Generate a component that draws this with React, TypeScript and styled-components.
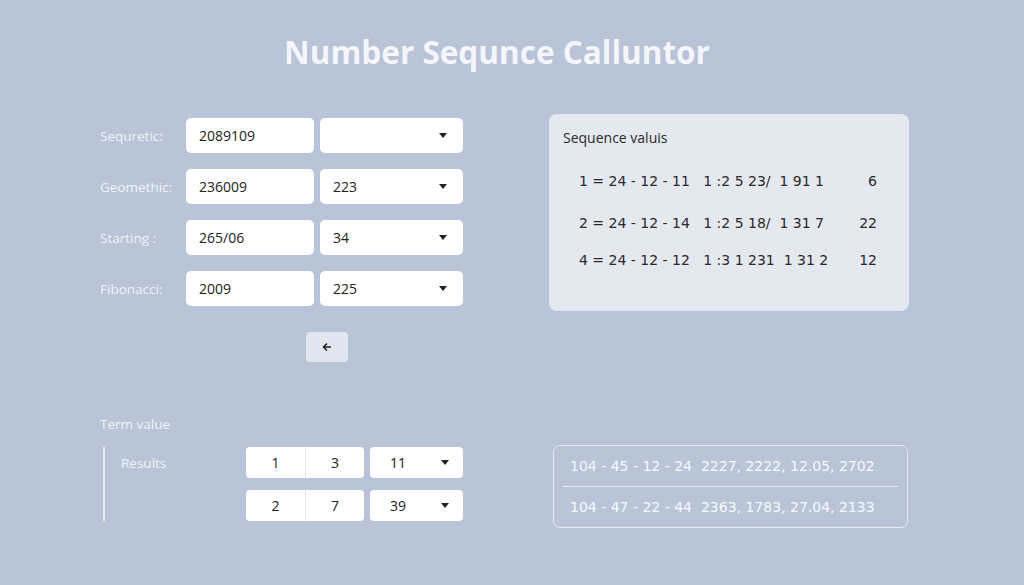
import React from 'react';
import styled, { createGlobalStyle } from 'styled-components';

const GlobalStyle = createGlobalStyle`
  html, body {
    margin: 0;
    padding: 0;
    background: #b9c4d8;
  }
  body {
    font-family: "Open Sans", "Noto Sans", sans-serif;
  }
`;

const Page = styled.div`
  width: 1024px;
  height: 585px;
  box-sizing: border-box;
  padding: 32px 0 0 100px;
  background: #b9c4d8;
  overflow: hidden;
`;

const Title = styled.h1`
  margin: 0 0 42px -100px;
  text-align: center;
  font-size: 31.5px;
  line-height: 40px;
  font-weight: 700;
  color: #f4f6fa;
  padding-right: 30px;
`;

const Section = styled.div`
  display: grid;
  grid-template-columns: 363px 360px;
  column-gap: 86px;
  align-items: start;
`;

const Form = styled.div`
  padding-top: 4px;
  display: grid;
  grid-template-columns: 80px 128px 143px;
  column-gap: 6px;
  row-gap: 16px;
  align-items: center;
`;

const Label = styled.div`
  font-size: 13.5px;
  color: #f0f3f8;
`;

const Field = styled.div`
  height: 35px;
  box-sizing: border-box;
  background: #fff;
  border-radius: 5px;
  display: flex;
  align-items: center;
  justify-content: space-between;
  padding: 0 16px 0 13px;
  font-size: 14px;
  color: #222;
`;

const Caret = styled.span`
  width: 0;
  height: 0;
  border-left: 4px solid transparent;
  border-right: 4px solid transparent;
  border-top: 5px solid #222;
`;

const ButtonRow = styled.div`
  grid-column: 2 / span 2;
  display: flex;
  justify-content: center;
  margin-top: 10px;
`;

const IconButton = styled.button`
  width: 42px;
  height: 30px;
  border: none;
  border-radius: 4px;
  background: #e2e6ee;
  display: flex;
  align-items: center;
  justify-content: center;
  padding: 0;
  margin-left: 4px;
`;

const Panel = styled.div`
  height: 197px;
  box-sizing: border-box;
  background: #e4e8ef;
  border-radius: 8px;
  padding: 15px 32px 0 14px;
  color: #2a2a2a;
`;

const PanelTitle = styled.div`
  font-size: 14px;
  line-height: 18px;
  margin-bottom: 25px;
`;

const SeqRow = styled.div`
  display: flex;
  justify-content: space-between;
  padding-left: 16px;
  font-family: "DejaVu Sans", sans-serif;
  font-size: 14px;
  line-height: 18px;
  white-space: pre;
  margin-bottom: ${p => p.$gap}px;
`;

const Bottom = styled(Section)`
  margin-top: 53px;
`;

const TermLabel = styled.div`
  font-size: 13.5px;
  line-height: 18px;
  color: #f0f3f8;
  margin-bottom: 14px;
`;

const ResultsBlock = styled.div`
  margin-left: 3px;
  border-left: 2px solid #e4e9f1;
  display: grid;
  grid-template-columns: 119px 118px 93px;
  column-gap: 6px;
  row-gap: 12px;
  padding-left: 16px;
  height: 74px;
  box-sizing: border-box;
`;

const ResultsLabel = styled.div`
  font-size: 13.5px;
  color: #f0f3f8;
  display: flex;
  align-items: center;
  height: 31px;
`;

const Cells = styled.div`
  display: grid;
  grid-template-columns: 1fr 1fr;
  height: 31px;
  background: #fff;
  border-radius: 4px;
  font-size: 14px;
  color: #222;
  & > span {
    display: flex;
    align-items: center;
    justify-content: center;
  }
  & > span + span {
    border-left: 1px solid #e4e6ea;
  }
`;

const SmallSelect = styled(Field)`
  height: 31px;
  border-radius: 4px;
  padding: 0 14px 0 20px;
`;

const OutBox = styled.div`
  margin: 30px 0 0 4px;
  width: 355px;
  height: 83px;
  box-sizing: border-box;
  border: 1.5px solid #e8edf5;
  border-radius: 7px;
  padding: 0 9px;
  display: flex;
  flex-direction: column;
  color: #f7f9fc;
`;

const OutLine = styled.div`
  flex: 1;
  display: flex;
  align-items: center;
  padding-left: 7px;
  white-space: pre;
  font-family: "DejaVu Sans", sans-serif;
  font-size: 14px;
  & + & {
    border-top: 1.5px solid #e8edf5;
  }
`;

const rows = [
  { label: 'Sequretic:', input: '2089109', sel: '' },
  { label: 'Geomethic:', input: '236009', sel: '223' },
  { label: 'Starting :', input: '265/06', sel: '34' },
  { label: 'Fibonacci:', input: '2009', sel: '225' },
];

const seq = [
  { expr: '1 = 24 - 12 - 11   1 :2 5 23/  1 91 1', val: '6', gap: 24 },
  { expr: '2 = 24 - 12 - 14   1 :2 5 18/  1 31 7', val: '22', gap: 19 },
  { expr: '4 = 24 - 12 - 12   1 :3 1 231  1 31 2', val: '12', gap: 0 },
];

export default function App() {
  return (
    <>
      <GlobalStyle />
      <Page>
        <Title>Number Sequnce Calluntor</Title>
        <Section>
          <Form>
            {rows.map(r => (
              <React.Fragment key={r.label}>
                <Label>{r.label}</Label>
                <Field>{r.input}</Field>
                <Field>
                  <span>{r.sel}</span>
                  <Caret />
                </Field>
              </React.Fragment>
            ))}
            <ButtonRow>
              <IconButton aria-label="back">
                <svg width="10" height="10" viewBox="0 0 10 10">
                  <path d="M5 1.5 L1.5 5 L5 8.5 M1.5 5 H9" stroke="#222" strokeWidth="1.6" fill="none" />
                </svg>
              </IconButton>
            </ButtonRow>
          </Form>
          <Panel>
            <PanelTitle>Sequence valuis</PanelTitle>
            {seq.map(s => (
              <SeqRow key={s.expr} $gap={s.gap}>
                <span>{s.expr}</span>
                <span>{s.val}</span>
              </SeqRow>
            ))}
          </Panel>
        </Section>
        <Bottom>
          <div>
            <TermLabel>Term value</TermLabel>
            <ResultsBlock>
              <ResultsLabel>Results</ResultsLabel>
              <Cells>
                <span>1</span>
                <span>3</span>
              </Cells>
              <SmallSelect>
                <span>11</span>
                <Caret />
              </SmallSelect>
              <div />
              <Cells>
                <span>2</span>
                <span>7</span>
              </Cells>
              <SmallSelect>
                <span>39</span>
                <Caret />
              </SmallSelect>
            </ResultsBlock>
          </div>
          <OutBox>
            <OutLine>104 - 45 - 12 - 24  2227, 2222, 12.05, 2702</OutLine>
            <OutLine>104 - 47 - 22 - 44  2363, 1783, 27.04, 2133</OutLine>
          </OutBox>
        </Bottom>
      </Page>
    </>
  );
}
